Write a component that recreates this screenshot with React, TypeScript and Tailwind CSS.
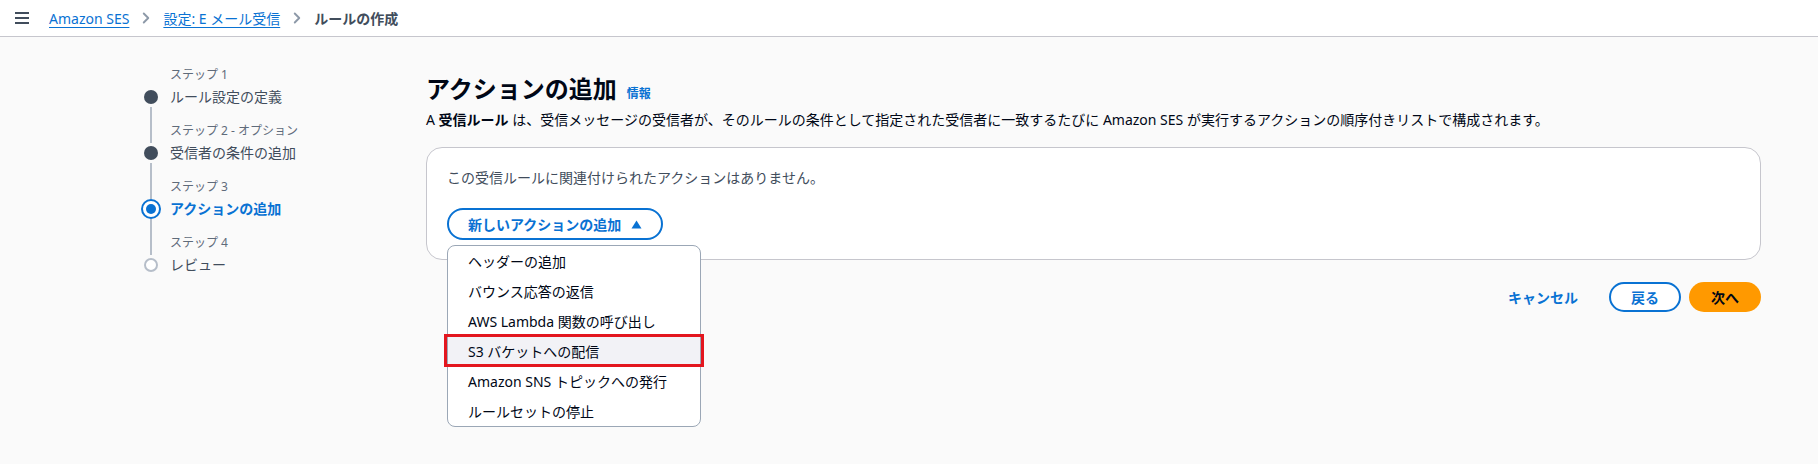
import { ChevronRight } from "lucide-react";

const FONT = { fontFamily: '"Noto Sans", "Noto Sans CJK JP", sans-serif' };

type StepState = "done" | "current" | "todo";

interface Step {
  caption: string;
  label: string;
  state: StepState;
}

const STEPS: Step[] = [
  { caption: "ステップ 1", label: "ルール設定の定義", state: "done" },
  { caption: "ステップ 2 - オプション", label: "受信者の条件の追加", state: "done" },
  { caption: "ステップ 3", label: "アクションの追加", state: "current" },
  { caption: "ステップ 4", label: "レビュー", state: "todo" },
];

const ACTIONS = [
  "ヘッダーの追加",
  "バウンス応答の返信",
  "AWS Lambda 関数の呼び出し",
  "S3 バケットへの配信",
  "Amazon SNS トピックへの発行",
  "ルールセットの停止",
];

function StepDot({ state }: { state: StepState }) {
  if (state === "current") {
    return (
      <div className="flex h-5 w-5 items-center justify-center rounded-full border-2 border-[#0972d3] bg-white">
        <div className="h-[10px] w-[10px] rounded-full bg-[#0972d3]" />
      </div>
    );
  }
  if (state === "done") {
    return <div className="h-[14px] w-[14px] rounded-full bg-[#414d5c]" />;
  }
  return <div className="h-[14px] w-[14px] rounded-full border-2 border-[#b6bec9] bg-white" />;
}

function Steps() {
  return (
    <nav className="w-[285px] shrink-0">
      {STEPS.map((s, i) => (
        <div key={s.caption} className="flex gap-[9px]">
          <div className="flex w-5 flex-col items-center">
            <div className={`h-[20px] w-[2px] ${i === 0 ? "bg-transparent" : "bg-[#b6bec9]"}`} />
            <div className="flex h-5 items-center">
              <StepDot state={s.state} />
            </div>
            <div className={`w-[2px] flex-1 ${i === STEPS.length - 1 ? "bg-transparent" : "bg-[#b6bec9]"}`} />
          </div>
          <div className="flex flex-col pb-[16px]">
            <span className="h-4 text-[12px] leading-4 text-[#5f6b7a]">{s.caption}</span>
            <span
              className={`mt-[4px] text-[14px] leading-5 ${
                s.state === "current" ? "font-bold text-[#0972d3]" : "text-[#414d5c]"
              }`}
            >
              {s.label}
            </span>
          </div>
        </div>
      ))}
    </nav>
  );
}

export default function App() {
  return (
    <div className="min-h-[464px] bg-[#fafafa] text-[#000716]" style={FONT}>
      <header className="flex h-[37px] items-center border-b border-[#c6c6cd] bg-white pl-[15px]">
        <div className="flex w-[14px] flex-col gap-[3px]">
          <span className="h-[2px] bg-[#414d5c]" />
          <span className="h-[2px] bg-[#414d5c]" />
          <span className="h-[2px] bg-[#414d5c]" />
        </div>
        <div className="ml-[20px] flex items-center text-[14px]">
          <a className="text-[#0972d3] underline underline-offset-[3px]">Amazon SES</a>
          <ChevronRight className="mx-[8px] h-[18px] w-[18px] text-[#8d99a8]" strokeWidth={2.5} />
          <a className="text-[#0972d3] underline underline-offset-[3px]">設定: E メール受信</a>
          <ChevronRight className="mx-[8px] h-[18px] w-[18px] text-[#8d99a8]" strokeWidth={2.5} />
          <span className="font-bold text-[#414d5c]">ルールの作成</span>
        </div>
      </header>

      <div className="flex pl-[141px] pr-[57px] pt-[30px]">
        <Steps />

        <main className="flex-1 pt-[7px]">
          <div className="flex items-baseline gap-[10px]">
            <h1 className="text-[24px] font-bold leading-[30px]">アクションの追加</h1>
            <a className="text-[12px] font-bold text-[#0972d3]">情報</a>
          </div>
          <p className="mt-[6px] text-[14px] leading-5 text-[#000716]">
            A <b>受信ルール</b> は、受信メッセージの受信者が、そのルールの条件として指定された受信者に一致するたびに Amazon SES
            が実行するアクションの順序付きリストで構成されます。
          </p>

          <section className="mt-[17px] rounded-[16px] border border-[#c6c6cd] bg-white px-[20px] pb-[19px] pt-[20px]">
            <p className="text-[14px] leading-5 text-[#414d5c]">この受信ルールに関連付けられたアクションはありません。</p>
            <div className="relative mt-[20px] inline-block">
              <button className="flex h-[32px] w-[216px] items-center justify-between rounded-full border-2 border-[#0972d3] pl-[19px] pr-[19px] text-[14px] font-bold text-[#0972d3]">
                新しいアクションの追加
                <svg width="11" height="9" viewBox="0 0 11 9">
                  <path d="M5.5 0.5 L10.5 8.5 L0.5 8.5 Z" fill="#0972d3" />
                </svg>
              </button>
              <ul className="absolute left-0 top-[37px] z-10 w-[254px] rounded-[8px] border border-[#9ba7b6] bg-white">
                {ACTIONS.map((a, i) => (
                  <li
                    key={a}
                    className={`relative flex h-[30px] items-center pl-[20px] text-[14px] text-[#000716] ${
                      i === 3 ? "bg-[#f2f2f6]" : ""
                    }`}
                  >
                    {a}
                    {i === 3 && (
                      <span className="pointer-events-none absolute -inset-x-[4px] -bottom-[1px] -top-[2px] border-[3px] border-[#e3161e]" />
                    )}
                  </li>
                ))}
              </ul>
            </div>
          </section>

          <div className="mt-[22px] flex items-center justify-end gap-[8px]">
            <button className="h-[30px] px-[14px] text-[14px] font-bold text-[#0972d3]">キャンセル</button>
            <button className="ml-[9px] h-[30px] w-[72px] rounded-full border-2 border-[#0972d3] bg-white text-[14px] font-bold text-[#0972d3]">
              戻る
            </button>
            <button className="h-[30px] w-[72px] rounded-full bg-[#ff9900] text-[14px] font-bold text-[#000716]">次へ</button>
          </div>
        </main>
      </div>
    </div>
  );
}
